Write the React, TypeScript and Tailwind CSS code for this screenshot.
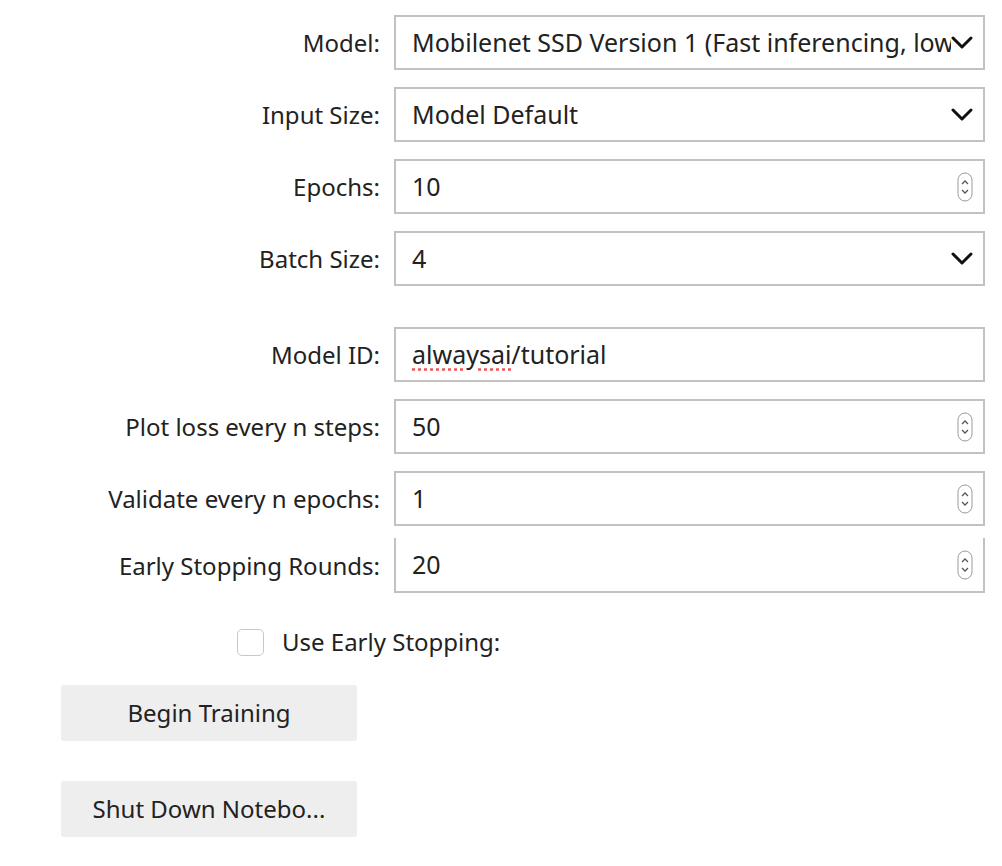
import React from "react";

const Chevron = () => (
  <svg width="22" height="14" viewBox="0 0 22 14" className="shrink-0">
    <path d="M2 2 L11 11 L20 2" fill="none" stroke="#111" strokeWidth="3" strokeLinecap="round" strokeLinejoin="round" />
  </svg>
);

const Spinner = () => (
  <svg width="16" height="30" viewBox="0 0 16 30" className="shrink-0">
    <rect x="1" y="1" width="14" height="28" rx="7" fill="white" stroke="#9a9a9a" strokeWidth="1" />
    <path d="M5 12 L8 9 L11 12" fill="none" stroke="#555" strokeWidth="1.3" />
    <path d="M5 18 L8 21 L11 18" fill="none" stroke="#555" strokeWidth="1.3" />
  </svg>
);

function Row({ label, value, kind, mt, noTop, spell }: { label: string; value: string; kind: "select" | "number" | "text"; mt: string; noTop?: boolean; spell?: boolean }) {
  return (
    <div className={`flex items-center ${mt}`}>
      <div className="w-[394px] pr-[14px] text-right text-[24px] text-[#222] whitespace-nowrap">{label}</div>
      <div className={`w-[591px] h-[55px] flex items-center pl-[16px] pr-[10px] border-2 border-[#c2c2c2] bg-white ${noTop ? "border-t-0" : ""}`}>
        <div className="flex-1 overflow-hidden whitespace-nowrap text-[25px] text-[#222]">
          {spell ? (
            <>
              <span className="underline decoration-dotted decoration-[#e55] underline-offset-4">alwaysai</span>/tutorial
            </>
          ) : value}
        </div>
        {kind === "select" && <Chevron />}
        {kind === "number" && <Spinner />}
      </div>
    </div>
  );
}

export default function App() {
  return (
    <div className="w-[1002px] h-[866px] bg-white pt-[15px] font-['Open_Sans','Liberation_Sans',sans-serif]">
      <Row label="Model:" value="Mobilenet SSD Version 1 (Fast inferencing, low" kind="select" mt="" />
      <Row label="Input Size:" value="Model Default" kind="select" mt="mt-[17px]" />
      <Row label="Epochs:" value="10" kind="number" mt="mt-[17px]" />
      <Row label="Batch Size:" value="4" kind="select" mt="mt-[17px]" />
      <Row label="Model ID:" value="alwaysai/tutorial" kind="text" mt="mt-[41px]" spell />
      <Row label="Plot loss every n steps:" value="50" kind="number" mt="mt-[17px]" />
      <Row label="Validate every n epochs:" value="1" kind="number" mt="mt-[17px]" />
      <Row label="Early Stopping Rounds:" value="20" kind="number" mt="mt-[12px]" noTop />
      <div className="flex items-center mt-[31px] pl-[237px]">
        <div className="w-[27px] h-[27px] rounded-[5px] border border-[#c8c8c8] bg-white" />
        <span className="ml-[18px] text-[24px] text-[#222]">Use Early Stopping:</span>
      </div>
      <div className="pl-[61px] mt-[25px]">
        <button className="w-[296px] h-[56px] rounded-[3px] bg-[#eeeeee] text-[24px] text-[#222]">Begin Training</button>
      </div>
      <div className="pl-[61px] mt-[40px]">
        <button className="w-[296px] h-[56px] rounded-[3px] bg-[#eeeeee] text-[24px] text-[#222]">Shut Down Notebo...</button>
      </div>
    </div>
  );
}
